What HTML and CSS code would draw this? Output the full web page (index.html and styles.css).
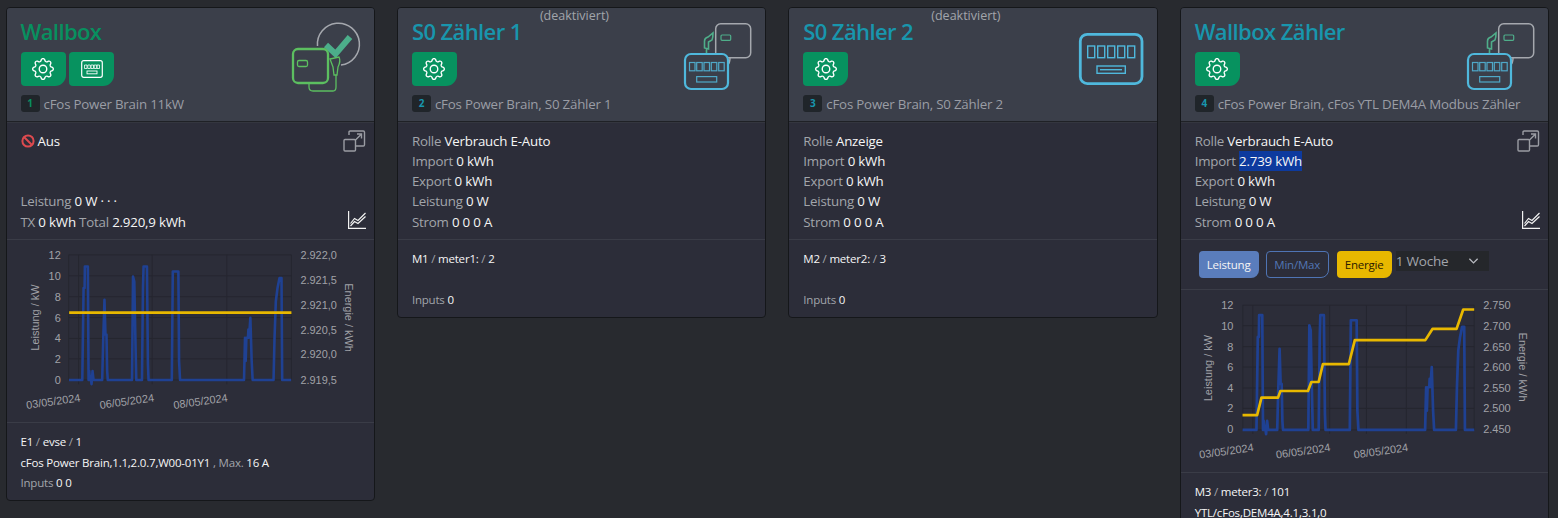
FILE: index.html
```html
<!DOCTYPE html>
<html lang="de">
<head>
<meta charset="utf-8">
<title>cFos Power Brain</title>
<link rel="stylesheet" href="styles.css">
</head>
<body>
<svg class="defs" width="0" height="0">
  <defs>
    <g id="gear"><path d="M8 4.754a3.246 3.246 0 1 0 0 6.492 3.246 3.246 0 0 0 0-6.492zM5.754 8a2.246 2.246 0 1 1 4.492 0 2.246 2.246 0 0 1-4.492 0z"/><path d="M9.796 1.343c-.527-1.79-3.065-1.79-3.592 0l-.094.319a.873.873 0 0 1-1.255.52l-.292-.16c-1.64-.892-3.433.902-2.54 2.541l.159.292a.873.873 0 0 1-.52 1.255l-.319.094c-1.79.527-1.79 3.065 0 3.592l.319.094a.873.873 0 0 1 .52 1.255l-.16.292c-.892 1.64.901 3.434 2.541 2.54l.292-.159a.873.873 0 0 1 1.255.52l.094.319c.527 1.79 3.065 1.79 3.592 0l.094-.319a.873.873 0 0 1 1.255-.52l.292.16c1.64.893 3.434-.902 2.54-2.541l-.159-.292a.873.873 0 0 1 .52-1.255l.319-.094c1.79-.527 1.79-3.065 0-3.592l-.319-.094a.873.873 0 0 1-.52-1.255l.16-.292c.893-1.64-.902-3.433-2.541-2.54l-.292.159a.873.873 0 0 1-1.255-.52l-.094-.319zm-2.633.283c.246-.835 1.428-.835 1.674 0l.094.319a1.873 1.873 0 0 0 2.693 1.115l.291-.16c.764-.415 1.6.42 1.184 1.185l-.159.292a1.873 1.873 0 0 0 1.116 2.692l.318.094c.835.246.835 1.428 0 1.674l-.319.094a1.873 1.873 0 0 0-1.115 2.693l.16.291c.415.764-.42 1.6-1.185 1.184l-.291-.159a1.873 1.873 0 0 0-2.693 1.116l-.094.318c-.246.835-1.428.835-1.674 0l-.094-.319a1.873 1.873 0 0 0-2.692-1.115l-.292.16c-.764.415-1.6-.42-1.184-1.185l.159-.291A1.873 1.873 0 0 0 1.945 8.93l-.319-.094c-.835-.246-.835-1.428 0-1.674l.319-.094A1.873 1.873 0 0 0 3.06 4.377l-.16-.292c-.415-.764.42-1.6 1.185-1.184l.292.159a1.873 1.873 0 0 0 2.692-1.115l.094-.319z"/></g>
    <g id="expand" fill="none" stroke-width="1.4">
      <path d="M6 5V2.2Q6 1 7.2 1H20.3Q21.5 1 21.5 2.2V14.8Q21.5 16 20.3 16H13"/>
      <rect x="1" y="9.5" width="11.5" height="11.5" rx="1"/>
      <path d="M12 10.5L18.5 4M14 4H18.5V8.5"/>
    </g>
    <g id="trend" fill="none" stroke-width="1.2">
      <path d="M.6 0V17.4H18"/>
      <path d="M2.5 12.5L6.5 7.5L10 9.5L17.5 2"/>
      <path d="M2.5 15L6.5 10.5L10 12.5L17.5 5.5"/>
    </g>
    <g id="combo" fill="none">
      <rect class="ico-gray" x="45.7" y="12.7" width="35" height="34" rx="5"/>
      <rect class="ico-green-t" x="51" y="24" width="9.7" height="5.3" rx="1"/>
      <path class="ico-gray" d="M60 47Q60 52 57.500 54"/>
      <path class="ico-green" d="M34.500 37V30Q34.500 27 38 26L43 22Q43 27 42 29L38.500 31V38ZM36.500 38V43"/>
      <rect class="ico-blue ico-fill" x="15" y="43" width="43" height="35" rx="6"/>
      <g class="ico-blue-t">
        <rect x="19.500" y="51.500" width="5.500" height="8.300"/><rect x="26.700" y="51.500" width="5.500" height="8.300"/><rect x="34" y="51.500" width="5.500" height="8.300"/><rect x="41.300" y="51.500" width="5.500" height="8.300"/><rect x="48.700" y="51.500" width="5.500" height="8.300"/>
        <rect x="26.700" y="65.600" width="20" height="5.400"/>
      </g>
    </g>
    <g id="meter-white" fill="none" stroke="#fff">
      <rect x=".7" y=".7" width="20.600" height="16.600" rx="2" stroke-width="1.200"/>
      <path stroke-width=".8" d="M3.500 5h2.500v3.500H3.500zM6.800 5h2.500v3.500H6.800zM10 5h2.500v3.500H10zM13.200 5h2.500v3.500h-2.500zM16 5h2.500v3.500H16z"/>
      <rect x="6" y="11" width="10" height="2.800" stroke-width=".9"/>
    </g>
    <path id="power" d="M68.300 380.700H81.700L83 288.300H84L84.300 266.700H87.300L88 380.700L88.700 371.700L89.300 380.700L90 376.700L91 385L92 371.700L93 380.700H101.700L102.700 341.700L104 300L105 335H106L106.700 371.700L107.300 380.700H131.700L132.700 276.700L134 281.700L135 335L136 380.700H141.700L142.700 288.300L143.300 266.700H146.700L147.700 365L148.300 380.700H171.700L172.700 271.700H178.300L179 361.700L180 380.700H244.300L245.300 338.300L246 361.700L246.700 338.300H248.300L248.700 330L249.300 338.300L250.700 318.300L252 361.700L253 380.700H274L275 338.300L276.300 301.700L278 288.300L280 278.300H282L282.700 380.700H291.700"/>
  </defs>
</svg>

<main class="board">

  <!-- Wallbox -->
  <section class="card">
    <header class="head">
      <div class="head-main">
        <h2 class="title title-green">Wallbox</h2>
        <div class="btns">
          <span class="btn-green"><svg class="gear" viewBox="0 0 16 16"><use href="#gear"/></svg></span>
          <span class="btn-green"><svg class="meter-ico" viewBox="0 0 22 18"><use href="#meter-white"/></svg></span>
        </div>
        <div class="sub"><span class="badge badge-green">1</span>cFos Power Brain 11kW</div>
      </div>
      <svg class="device" viewBox="0 0 95 90" fill="none">
        <path class="ico-gray" d="M38.500 35A21 21 0 1 1 62 54"/>
        <path d="M47 34L56.500 43L71 26" stroke="#4cae8a" stroke-width="6"/>
        <rect class="ico-lime ico-fill" x="14" y="38" width="35" height="34" rx="5"/>
        <rect class="ico-lime-t" x="18.500" y="49.500" width="10" height="6" rx="1.500"/>
        <path class="ico-lime-t" d="M51 48L60 46Q62 50 59 56L58 64H55L54 56ZM57 64V76Q57 80 54 80H34Q30 80 30 76V72"/>
      </svg>
    </header>
    <div class="info">
      <svg class="float-expand" viewBox="0 0 23 22"><use href="#expand"/></svg>
      <div class="row"><svg class="ban" viewBox="0 0 14 14" fill="none"><circle cx="7" cy="7" r="5.600"/><path d="M3 3L11 11"/></svg><b>Aus</b></div>
      <div class="row"></div>
      <div class="row"></div>
      <div class="row">Leistung <b>0 W · · ·</b></div>
      <div class="row">TX <b>0 kWh</b> Total <b>2.920,9 kWh</b></div>
      <svg class="float-trend" viewBox="0 0 19 18"><use href="#trend"/></svg>
    </div>
    <svg class="chart" viewBox="7 240 367 183">
      <g class="grid-lines">
        <path d="M68 255H292M68 276H292M68 297H292M68 318H292M68 339H292M68 359.500H292M68 380.700H292M78 255V385M152 255V385M227 255V385M68 255V380M292 255V380"/>
      </g>
      <g class="tick tick-l">
        <text x="60" y="259">12</text><text x="60" y="280">10</text><text x="60" y="301">8</text><text x="60" y="322">6</text><text x="60" y="343">4</text><text x="60" y="363.500">2</text><text x="60" y="384.500">0</text>
      </g>
      <g class="tick">
        <text x="301" y="259">2.922,0</text><text x="301" y="284">2.921,5</text><text x="301" y="309">2.921,0</text><text x="301" y="334.500">2.920,5</text><text x="301" y="359">2.920,0</text><text x="301" y="384.500">2.919,5</text>
      </g>
      <text class="tick axis" transform="translate(38 318) rotate(-90)">Leistung / kW</text>
      <text class="tick axis" transform="translate(346 318) rotate(90)">Energie / kWh</text>
      <text class="tick axis" transform="translate(53 406) rotate(-8)">03/05/2024</text>
      <text class="tick axis" transform="translate(127 406) rotate(-8)">06/05/2024</text>
      <text class="tick axis" transform="translate(201 406) rotate(-8)">08/05/2024</text>
      <use class="line-power" href="#power"/>
      <path class="line-energy" d="M68.500 313H292"/>
    </svg>
    <div class="foot">
      <div class="foot-row"><b>E1</b> / <b>evse</b> / <b>1</b></div>
      <div class="foot-row"><b>cFos Power Brain,1.1,2.0.7,W00-01Y1</b> , Max. <b>16 A</b></div>
      <div class="foot-row">Inputs <b>0 0</b></div>
    </div>
  </section>

  <!-- S0 Zaehler 1 -->
  <section class="card">
    <span class="off">(deaktiviert)</span>
    <header class="head">
      <div class="head-main">
        <h2 class="title">S0 Zähler 1</h2>
        <div class="btns"><span class="btn-green"><svg class="gear" viewBox="0 0 16 16"><use href="#gear"/></svg></span></div>
        <div class="sub"><span class="badge">2</span>cFos Power Brain, S0 Zähler 1</div>
      </div>
      <svg class="device" viewBox="0 0 95 90"><use href="#combo"/></svg>
    </header>
    <div class="info">
      <div class="row">Rolle <b>Verbrauch E-Auto</b></div>
      <div class="row">Import <b>0 kWh</b></div>
      <div class="row">Export <b>0 kWh</b></div>
      <div class="row">Leistung <b>0 W</b></div>
      <div class="row">Strom <b>0 0 0 A</b></div>
    </div>
    <div class="foot">
      <div class="foot-row"><b>M1</b> / <b>meter1:</b> / <b>2</b></div>
      <div class="foot-row"></div>
      <div class="foot-row">Inputs <b>0</b></div>
    </div>
  </section>

  <!-- S0 Zaehler 2 -->
  <section class="card">
    <span class="off">(deaktiviert)</span>
    <header class="head">
      <div class="head-main">
        <h2 class="title">S0 Zähler 2</h2>
        <div class="btns"><span class="btn-green"><svg class="gear" viewBox="0 0 16 16"><use href="#gear"/></svg></span></div>
        <div class="sub"><span class="badge">3</span>cFos Power Brain, S0 Zähler 2</div>
      </div>
      <svg class="device" viewBox="0 0 95 90" fill="none">
        <rect class="ico-blue-b" x="18.300" y="23.300" width="61.700" height="49.300" rx="7"/>
        <g class="ico-blue-m">
          <rect x="25.700" y="35" width="7" height="11.700"/><rect x="35.700" y="35" width="7" height="11.700"/><rect x="45.700" y="35" width="7" height="11.700"/><rect x="55.700" y="35" width="7" height="11.700"/><rect x="65.700" y="35" width="7" height="11.700"/>
          <rect x="35" y="55" width="28.300" height="7.300"/>
          <path d="M38 58.700H60"/>
        </g>
      </svg>
    </header>
    <div class="info">
      <div class="row">Rolle <b>Anzeige</b></div>
      <div class="row">Import <b>0 kWh</b></div>
      <div class="row">Export <b>0 kWh</b></div>
      <div class="row">Leistung <b>0 W</b></div>
      <div class="row">Strom <b>0 0 0 A</b></div>
    </div>
    <div class="foot">
      <div class="foot-row"><b>M2</b> / <b>meter2:</b> / <b>3</b></div>
      <div class="foot-row"></div>
      <div class="foot-row">Inputs <b>0</b></div>
    </div>
  </section>

  <!-- Wallbox Zaehler -->
  <section class="card">
    <header class="head">
      <div class="head-main">
        <h2 class="title">Wallbox Zähler</h2>
        <div class="btns"><span class="btn-green"><svg class="gear" viewBox="0 0 16 16"><use href="#gear"/></svg></span></div>
        <div class="sub"><span class="badge">4</span>cFos Power Brain, cFos YTL DEM4A Modbus Zähler</div>
      </div>
      <svg class="device" viewBox="0 0 95 90"><use href="#combo"/></svg>
    </header>
    <div class="info">
      <svg class="float-expand" viewBox="0 0 23 22"><use href="#expand"/></svg>
      <div class="row">Rolle <b>Verbrauch E-Auto</b></div>
      <div class="row">Import <b class="sel">2.739 kWh</b></div>
      <div class="row">Export <b>0 kWh</b></div>
      <div class="row">Leistung <b>0 W</b></div>
      <div class="row">Strom <b>0 0 0 A</b></div>
      <svg class="float-trend" viewBox="0 0 19 18"><use href="#trend"/></svg>
    </div>
    <div class="controls">
      <span class="ctl ctl-blue">Leistung</span>
      <span class="ctl ctl-outline">Min/Max</span>
      <span class="ctl ctl-yellow">Energie</span>
      <span class="range">1 Woche<svg class="chev" viewBox="0 0 12 8" fill="none"><path d="M1.500 1.500L6 6L10.500 1.500"/></svg></span>
    </div>
    <svg class="chart chart-b" viewBox="1181 290 368 182">
      <g class="grid-lines">
        <path d="M1243 305H1475M1243 325.500H1475M1243 346.500H1475M1243 367H1475M1243 388H1475M1243 408.500H1475M1243 430H1475M1253 305V434M1330 305V434M1367 305V434M1407 305V434M1243 305V430M1475 305V430"/>
      </g>
      <g class="tick tick-l">
        <text x="1233.500" y="309">12</text><text x="1233.500" y="329.500">10</text><text x="1233.500" y="350.500">8</text><text x="1233.500" y="371">6</text><text x="1233.500" y="392">4</text><text x="1233.500" y="412.500">2</text><text x="1233.500" y="433">0</text>
      </g>
      <g class="tick">
        <text x="1484" y="309">2.750</text><text x="1484" y="329.500">2.700</text><text x="1484" y="350.500">2.650</text><text x="1484" y="371">2.600</text><text x="1484" y="392">2.550</text><text x="1484" y="412.500">2.500</text><text x="1484" y="433">2.450</text>
      </g>
      <text class="tick axis" transform="translate(1212 368) rotate(-90)">Leistung / kW</text>
      <text class="tick axis" transform="translate(1520 367) rotate(90)">Energie / kWh</text>
      <text class="tick axis" transform="translate(1227 455) rotate(-8)">03/05/2024</text>
      <text class="tick axis" transform="translate(1304 455) rotate(-8)">06/05/2024</text>
      <text class="tick axis" transform="translate(1382 455) rotate(-8)">08/05/2024</text>
      <use class="line-power" href="#power" transform="translate(1171.700 45.900) scale(1.040 1.009)"/>
      <path class="line-energy" d="M1242.700 415.300H1257.300L1261.700 397.700H1278.300L1280.700 391H1308.300L1311.700 382H1319L1323.300 364H1349.300L1355.300 340H1426L1433.300 328.700H1457.300L1464 309.300H1475"/>
    </svg>
    <div class="foot">
      <div class="foot-row"><b>M3</b> / <b>meter3:</b> / <b>101</b></div>
      <div class="foot-row"><b>YTL/cFos,DEM4A,4.1,3.1,0</b></div>
    </div>
  </section>

</main>
</body>
</html>
```

FILE: styles.css
```css
* { box-sizing: border-box; }

html, body {
  margin: 0;
  height: 518px;
  overflow: hidden;
  background: #282a2f;
}

body {
  font-family: "Open Sans", "Noto Sans", sans-serif;
  font-size: 13.300px;
  letter-spacing: -0.2px;
  color: #a2a5ab;
}

b { font-weight: 400; color: #f6f6f6; }

.defs { display: block; height: 0; }

.board {
  display: grid;
  grid-template-columns: repeat(4, 369.600px);
  column-gap: 21.800px;
  align-items: start;
  padding: 6.5px 0 0 5.500px;
}

.card {
  position: relative;
  background: #2c2d39;
  border: 1px solid #15171a;
  border-radius: 4px;
}

.head {
  display: flex;
  justify-content: space-between;
  height: 114px;
  padding: 7px 0 0 14px;
  background: #3b3f4a;
  border-bottom: 1px solid #1f2126;
  border-radius: 3px 3px 0 0;
}

.head-main { flex: 1; min-width: 0; }

.title {
  margin: 0;
  height: 33px;
  font-size: 22px;
  line-height: 33px;
  font-weight: 600;
  letter-spacing: -0.6px;
  color: #1896ad;
}

.title-green { color: #08905f; }

.btns { display: flex; gap: 3.500px; margin-top: 4px; }

.btn-green {
  display: flex;
  align-items: center;
  justify-content: center;
  width: 45px;
  height: 34px;
  background: #07925f;
  border-radius: 4px 4px 11px 4px;
}

.gear { width: 22px; height: 22px; fill: #fff; }
.meter-ico { width: 22px; height: 18px; }

.sub {
  display: flex;
  align-items: center;
  height: 18px;
  margin-top: 9px;
  white-space: nowrap;
  color: #9a9da5;
}

.badge {
  flex: none;
  width: 19px;
  height: 17.500px;
  margin-right: 4px;
  background: #20252a;
  border-radius: 3px;
  color: #1896ad;
  font-size: 10px;
  font-weight: 700;
  line-height: 17.500px;
  text-align: center;
}

.badge-green { color: #08905f; }

.device { flex: none; width: 95px; height: 90px; margin-top: -4px; }

.off {
  position: absolute;
  left: 142px;
  top: -1px;
  font-size: 12.500px;
  letter-spacing: 0;
  color: #a2a5ab;
}

.info {
  position: relative;
  padding: 8px 14px 7px;
  border-top: 1px solid #34363f;
}

.row {
  height: 20.250px;
  line-height: 20.250px;
  white-space: pre;
}

.ban {
  width: 14px;
  height: 14px;
  margin-right: 3px;
  vertical-align: -2px;
  stroke: #dc4a4f;
  stroke-width: 2;
}

.float-expand {
  position: absolute;
  right: 8px;
  top: 7px;
  width: 23px;
  height: 22px;
  stroke: #9a9ca3;
}

.float-trend {
  position: absolute;
  right: 7.500px;
  top: 88px;
  width: 19px;
  height: 18px;
  stroke: #f2f2f2;
}

.sel {
  display: inline-block;
  height: 20.250px;
  background: #0d3a9e;
}

.controls {
  display: flex;
  align-items: flex-start;
  height: 50px;
  padding: 11px 0 0 18px;
  border-top: 1px solid #3a3c47;
  font-size: 11.500px;
}

.ctl {
  display: flex;
  align-items: center;
  justify-content: center;
  height: 27px;
  border-radius: 4px 4px 8px 4px;
}

.ctl-blue { width: 60px; margin-right: 7px; background: #5a7dbc; color: #f5f5f5; }
.ctl-outline { width: 63px; margin-right: 8px; border: 1px solid #4f74b4; color: #5276b4; }
.ctl-yellow { width: 55px; margin-right: 4px; background: #e8b800; color: #2c1a00; }

.range {
  display: flex;
  align-items: center;
  justify-content: space-between;
  width: 93px;
  height: 20px;
  padding: 0 10px 0 0;
  background: #25272b;
  font-size: 13.500px;
  color: #a2a5ab;
}

.chev {
  width: 11px;
  height: 8px;
  stroke: #b8bac0;
  stroke-width: 1.400;
}

.chart {
  display: block;
  width: 367px;
  height: 183px;
  border-top: 1px solid #3a3c47;
}

.chart-b { border-top-color: #3a3c47; }

.grid-lines path { fill: none; stroke: #25262f; stroke-width: 1; }

.tick {
  font-family: "Liberation Sans", Arial, sans-serif;
  font-size: 11px;
  letter-spacing: 0;
  fill: #a1a2a8;
}

.tick-l text { text-anchor: end; }
.axis { text-anchor: middle; }

.line-power {
  fill: none;
  stroke: #1f4193;
  stroke-width: 2.600;
  stroke-linejoin: round;
}

.line-energy {
  fill: none;
  stroke: #e8b800;
  stroke-width: 2.700;
  stroke-linejoin: round;
}

.foot {
  padding: 9px 14px 6px;
  border-top: 1px solid #3a3c47;
  font-size: 11.500px;
}

.foot-row {
  height: 20.800px;
  line-height: 20.800px;
  white-space: pre;
}

.ico-gray { fill: none; stroke: #a5a8ae; stroke-width: 1.500; }
.ico-green { fill: none; stroke: #4fae8a; stroke-width: 1.600; }
.ico-green-t { fill: none; stroke: #4fae8a; stroke-width: 1.200; }
.ico-lime { stroke: #5cbf60; stroke-width: 2.300; }
.ico-lime-t { fill: none; stroke: #5cbf60; stroke-width: 1.300; }
.ico-fill { fill: #3b3f4a; }
.ico-blue { stroke: #4fb8dc; stroke-width: 2.200; }
.ico-blue-t rect { fill: none; stroke: #4fa8c8; stroke-width: 1.200; }
.ico-blue-b { stroke: #4fb8dc; stroke-width: 2.800; }
.ico-blue-m rect, .ico-blue-m path { fill: none; stroke: #4fb8dc; stroke-width: 1.400; }
```
